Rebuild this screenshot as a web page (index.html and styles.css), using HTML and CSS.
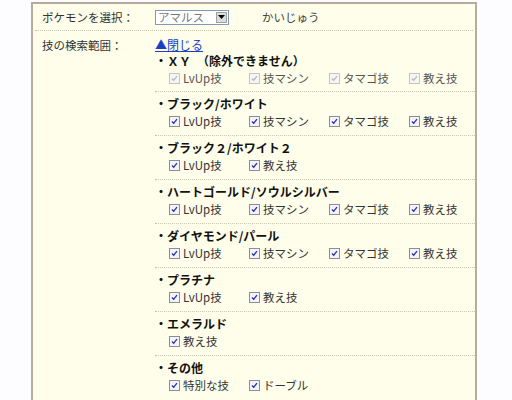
FILE: index.html
```html
<!DOCTYPE html>
<html lang="ja">
<head>
<meta charset="utf-8">
<link rel="stylesheet" href="styles.css">
</head>
<body>
<div class="panel">
  <div class="row row-first">
    <div class="label">ポケモンを選択：</div>
    <div class="value inline">
      <span class="select"><span class="select-text">アマルス</span><span class="select-btn"><svg width="7" height="4" viewBox="0 0 7 4"><path d="M0 0h7L3.5 4z" fill="#000"/></svg></span></span>
      <span class="type">かいじゅう</span>
    </div>
  </div>
  <div class="row row-second">
    <div class="label">技の検索範囲：</div>
    <div class="value">
      <a class="toggle" href="#">▲閉じる</a>
      <div class="group group-first">
        <div class="title">・ＸＹ　（除外できません）</div>
        <div class="checks disabled">
          <label class="item"><span class="cb"><svg viewBox="0 0 11 11"><path d="M2.5 5.5l2 2.2 4-5" fill="none" stroke="currentColor" stroke-width="1.6"/></svg></span>LvUp技</label>
          <label class="item"><span class="cb"><svg viewBox="0 0 11 11"><path d="M2.5 5.5l2 2.2 4-5" fill="none" stroke="currentColor" stroke-width="1.6"/></svg></span>技マシン</label>
          <label class="item"><span class="cb"><svg viewBox="0 0 11 11"><path d="M2.5 5.5l2 2.2 4-5" fill="none" stroke="currentColor" stroke-width="1.6"/></svg></span>タマゴ技</label>
          <label class="item"><span class="cb"><svg viewBox="0 0 11 11"><path d="M2.5 5.5l2 2.2 4-5" fill="none" stroke="currentColor" stroke-width="1.6"/></svg></span>教え技</label>
        </div>
      </div>
      <div class="group">
        <div class="title">・ブラック/ホワイト</div>
        <div class="checks">
          <label class="item"><span class="cb"><svg viewBox="0 0 11 11"><path d="M2.5 5.5l2 2.2 4-5" fill="none" stroke="currentColor" stroke-width="1.6"/></svg></span>LvUp技</label>
          <label class="item"><span class="cb"><svg viewBox="0 0 11 11"><path d="M2.5 5.5l2 2.2 4-5" fill="none" stroke="currentColor" stroke-width="1.6"/></svg></span>技マシン</label>
          <label class="item"><span class="cb"><svg viewBox="0 0 11 11"><path d="M2.5 5.5l2 2.2 4-5" fill="none" stroke="currentColor" stroke-width="1.6"/></svg></span>タマゴ技</label>
          <label class="item"><span class="cb"><svg viewBox="0 0 11 11"><path d="M2.5 5.5l2 2.2 4-5" fill="none" stroke="currentColor" stroke-width="1.6"/></svg></span>教え技</label>
        </div>
      </div>
      <div class="group">
        <div class="title">・ブラック２/ホワイト２</div>
        <div class="checks">
          <label class="item"><span class="cb"><svg viewBox="0 0 11 11"><path d="M2.5 5.5l2 2.2 4-5" fill="none" stroke="currentColor" stroke-width="1.6"/></svg></span>LvUp技</label>
          <label class="item"><span class="cb"><svg viewBox="0 0 11 11"><path d="M2.5 5.5l2 2.2 4-5" fill="none" stroke="currentColor" stroke-width="1.6"/></svg></span>教え技</label>
        </div>
      </div>
      <div class="group">
        <div class="title">・ハートゴールド/ソウルシルバー</div>
        <div class="checks">
          <label class="item"><span class="cb"><svg viewBox="0 0 11 11"><path d="M2.5 5.5l2 2.2 4-5" fill="none" stroke="currentColor" stroke-width="1.6"/></svg></span>LvUp技</label>
          <label class="item"><span class="cb"><svg viewBox="0 0 11 11"><path d="M2.5 5.5l2 2.2 4-5" fill="none" stroke="currentColor" stroke-width="1.6"/></svg></span>技マシン</label>
          <label class="item"><span class="cb"><svg viewBox="0 0 11 11"><path d="M2.5 5.5l2 2.2 4-5" fill="none" stroke="currentColor" stroke-width="1.6"/></svg></span>タマゴ技</label>
          <label class="item"><span class="cb"><svg viewBox="0 0 11 11"><path d="M2.5 5.5l2 2.2 4-5" fill="none" stroke="currentColor" stroke-width="1.6"/></svg></span>教え技</label>
        </div>
      </div>
      <div class="group">
        <div class="title">・ダイヤモンド/パール</div>
        <div class="checks">
          <label class="item"><span class="cb"><svg viewBox="0 0 11 11"><path d="M2.5 5.5l2 2.2 4-5" fill="none" stroke="currentColor" stroke-width="1.6"/></svg></span>LvUp技</label>
          <label class="item"><span class="cb"><svg viewBox="0 0 11 11"><path d="M2.5 5.5l2 2.2 4-5" fill="none" stroke="currentColor" stroke-width="1.6"/></svg></span>技マシン</label>
          <label class="item"><span class="cb"><svg viewBox="0 0 11 11"><path d="M2.5 5.5l2 2.2 4-5" fill="none" stroke="currentColor" stroke-width="1.6"/></svg></span>タマゴ技</label>
          <label class="item"><span class="cb"><svg viewBox="0 0 11 11"><path d="M2.5 5.5l2 2.2 4-5" fill="none" stroke="currentColor" stroke-width="1.6"/></svg></span>教え技</label>
        </div>
      </div>
      <div class="group">
        <div class="title">・プラチナ</div>
        <div class="checks">
          <label class="item"><span class="cb"><svg viewBox="0 0 11 11"><path d="M2.5 5.5l2 2.2 4-5" fill="none" stroke="currentColor" stroke-width="1.6"/></svg></span>LvUp技</label>
          <label class="item"><span class="cb"><svg viewBox="0 0 11 11"><path d="M2.5 5.5l2 2.2 4-5" fill="none" stroke="currentColor" stroke-width="1.6"/></svg></span>教え技</label>
        </div>
      </div>
      <div class="group">
        <div class="title">・エメラルド</div>
        <div class="checks">
          <label class="item"><span class="cb"><svg viewBox="0 0 11 11"><path d="M2.5 5.5l2 2.2 4-5" fill="none" stroke="currentColor" stroke-width="1.6"/></svg></span>教え技</label>
        </div>
      </div>
      <div class="group group-last">
        <div class="title">・その他</div>
        <div class="checks">
          <label class="item"><span class="cb"><svg viewBox="0 0 11 11"><path d="M2.5 5.5l2 2.2 4-5" fill="none" stroke="currentColor" stroke-width="1.6"/></svg></span>特別な技</label>
          <label class="item"><span class="cb"><svg viewBox="0 0 11 11"><path d="M2.5 5.5l2 2.2 4-5" fill="none" stroke="currentColor" stroke-width="1.6"/></svg></span>ドーブル</label>
        </div>
      </div>
    </div>
  </div>
</div>
</body>
</html>
```

FILE: styles.css
```css
html, body {
  margin: 0;
  padding: 0;
  background: #fdfcfe;
}
body {
  font-family: "Noto Sans CJK JP", "Noto Sans", sans-serif;
  font-size: 11.5px;
  color: #333;
  padding-top: 2px;
}
.panel {
  margin-left: 31px;
  width: 438px;
  border: 2px solid #b7ab9c;
  border-bottom: none;
  background: #fefeea;
  padding: 0 2px;
  height: 398px;
  overflow: hidden;
}
.row {
  display: grid;
  grid-template-columns: 120px 1fr;
}
.row-first {
  height: 26px;
  align-items: center;
  border-bottom: 1px dotted #c9c6b0;
}
.row-second {
  padding-top: 6px;
}
.label {
  padding-left: 7px;
  line-height: 16px;
}
.value.inline {
  display: flex;
  align-items: center;
}
.select {
  display: flex;
  align-items: center;
  width: 74px;
  height: 15px;
  border: 1px solid #7f9db9;
  background: #fff;
  box-sizing: border-box;
  justify-content: space-between;
  padding: 0 1px 0 2px;
}
.select-text {
  color: #777;
  line-height: 13px;
}
.select-btn {
  width: 11px;
  height: 11px;
  background: #dcdcdc;
  border: 1px solid #a0a0a0;
  box-sizing: border-box;
  display: flex;
  align-items: center;
  justify-content: center;
}
.select-btn svg { display: block; }
.type {
  margin-left: 33px;
  color: #444;
}
.toggle {
  display: block;
  color: #1a3fc4;
  text-decoration: underline;
  line-height: 16px;
  font-size: 12px;
}
.group {
  padding: 4px 0 5px;
  border-bottom: 1px dotted #c9c6b0;
}
.group-first {
  padding-top: 0;
  padding-bottom: 4px;
}
.group-last {
  border-bottom: none;
}
.title {
  font-weight: bold;
  color: #111;
  font-size: 12px;
  line-height: 16px;
}
.checks {
  display: flex;
  padding-left: 14px;
  line-height: 18px;
}
.item {
  width: 80px;
  display: flex;
  align-items: center;
  color: #333;
}
.cb {
  width: 11px;
  height: 11px;
  border: 1px solid #8c8c9c;
  box-sizing: border-box;
  background: #f4f4f8;
  color: #2233aa;
  margin-right: 3px;
  display: flex;
}
.cb svg {
  width: 9px;
  height: 9px;
}
.disabled .cb {
  color: #b8b8b8;
  border-color: #c4c4c4;
  background: #f6f6f6;
}
.disabled .item {
  color: #555;
}
```
